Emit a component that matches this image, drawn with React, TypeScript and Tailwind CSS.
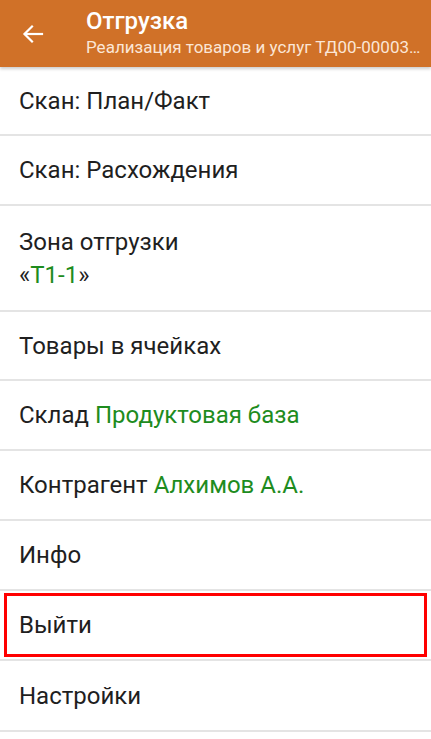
import React from "react";

const Row = ({ children, className = "" }: { children: React.ReactNode; className?: string }) => (
  <div className={"bg-white flex items-center px-[19px] text-[24px] text-[#1f1f1f] " + className}>{children}</div>
);

const Sep = () => <div className="h-[2px] bg-[#e4e4e4]" />;

export default function App() {
  return (
    <div className="w-[431px] h-[739px] bg-white overflow-hidden" style={{ fontFamily: "Roboto, 'Noto Sans', sans-serif" }}>
      <div className="h-[67px] bg-[#d07128] flex items-center shadow-[0_2px_3px_rgba(0,0,0,0.2)] relative z-10">
        <div className="w-[86px] shrink-0 flex items-center pl-[22px]">
          <svg width="22" height="20" viewBox="0 0 22 20" fill="none" stroke="white" strokeWidth="2.2" strokeLinecap="square">
            <path d="M20 10H3" />
            <path d="M10 2.5L2.5 10L10 17.5" />
          </svg>
        </div>
        <div className="flex flex-col min-w-0 flex-1 pb-[4px]">
          <div className="text-white text-[24px] font-medium leading-[28px]">Отгрузка</div>
          <div className="text-[#fbe6d6] text-[17px] leading-[20px] mt-[2px] whitespace-nowrap">
            Реализация товаров и услуг ТД00-00003…
          </div>
        </div>
      </div>
      <Row className="h-[67px]">Скан: План/Факт</Row>
      <Sep />
      <Row className="h-[68px]">Скан: Расхождения</Row>
      <Sep />
      <Row className="h-[104px]">
        <div className="leading-[33px] mt-[2px]">
          <div>Зона отгрузки</div>
          <div>
            «<span className="text-[#1e8c1e]">Т1-1</span>»
          </div>
        </div>
      </Row>
      <Sep />
      <Row className="h-[67px]">Товары в ячейках</Row>
      <Sep />
      <Row className="h-[68px]">
        Склад&nbsp;<span className="text-[#1e8c1e]">Продуктовая база</span>
      </Row>
      <Sep />
      <Row className="h-[68px]">
        Контрагент&nbsp;<span className="text-[#1e8c1e]">Алхимов А.А.</span>
      </Row>
      <Sep />
      <Row className="h-[68px]">Инфо</Row>
      <Sep />
      <div className="bg-white h-[68px] px-[4px] py-[2px] flex">
        <div className="flex-1 border-[3px] border-[#ff0000] flex items-center pl-[12px] text-[24px] text-[#1f1f1f]">Выйти</div>
      </div>
      <Sep />
      <Row className="h-[69px]">Настройки</Row>
      <Sep />
    </div>
  );
}
